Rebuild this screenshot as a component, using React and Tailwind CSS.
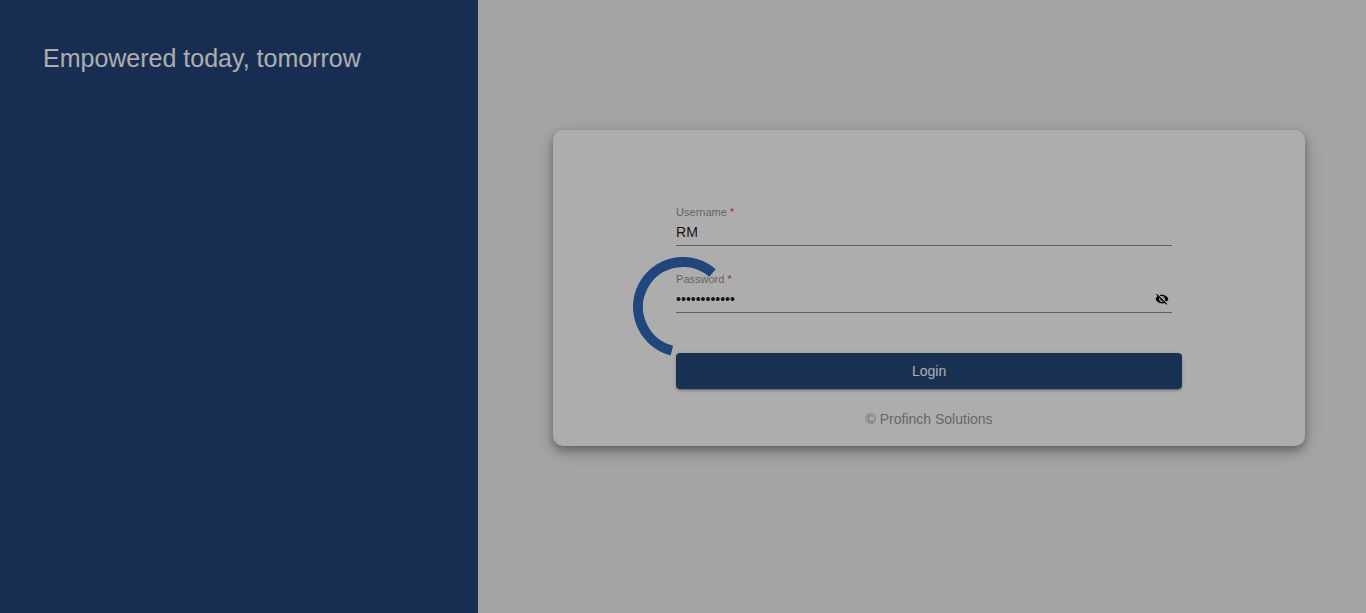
import { useState } from "react";
import { MdVisibility, MdVisibilityOff } from "react-icons/md";

function Field({ id, label, type, value, onChange, children }) {
  return (
    <div className="mr-2.5 border-b border-[#8c8c8c] pb-[5px]">
      <label htmlFor={id} className="block text-[11px] leading-3 text-[#959595]">
        {label} <span className="text-[#f44336]">*</span>
      </label>
      <div className="mt-1.5 flex h-4 items-center">
        <input
          id={id}
          type={type}
          required
          value={value}
          onChange={(e) => onChange(e.target.value)}
          className="h-4 min-w-0 flex-1 bg-transparent p-0 text-sm leading-4 text-black/90 outline-none"
        />
        {children}
      </div>
    </div>
  );
}

function Spinner() {
  return (
    <div
      role="progressbar"
      aria-label="Loading"
      className="fixed inset-0 flex items-center justify-center bg-black/32"
    >
      <svg viewBox="0 0 100 100" className="size-[100px]" fill="none">
        <path
          d="M79.5 16A45 45 0 1 0 38.9 93.6"
          stroke="#21467c"
          strokeWidth="10"
        />
      </svg>
    </div>
  );
}

export default function App() {
  const [username, setUsername] = useState("RM");
  const [password, setPassword] = useState("password1234");
  const [visible, setVisible] = useState(false);

  return (
    <div className="flex min-h-screen font-['Liberation_Sans',Arial,sans-serif]">
      <aside className="w-[35%] bg-[#22457a] px-[43px] py-10">
        <h1 className="text-[25px] leading-9 whitespace-nowrap text-white">
          Empowered today, tomorrow
        </h1>
      </aside>
      <main className="flex-1 bg-[#f3f3f3] pt-[130px] pr-[61px] pl-[75px]">
        <form
          onSubmit={(e) => e.preventDefault()}
          className="rounded-[10px] bg-white px-[123px] pt-[76px] pb-[17px] shadow-[0_4px_8px_rgba(0,0,0,0.3),0_6px_20px_rgba(0,0,0,0.19)]"
        >
          <div className="flex flex-col gap-[27px]">
            <Field
              id="username"
              label="Username"
              type="text"
              value={username}
              onChange={setUsername}
            />
            <Field
              id="password"
              label="Password"
              type={visible ? "text" : "password"}
              value={password}
              onChange={setPassword}
            >
              <button
                type="button"
                aria-label="Toggle password visibility"
                onClick={() => setVisible(!visible)}
                className="mr-[3px] text-black"
              >
                {visible ? (
                  <MdVisibility className="size-3.5" />
                ) : (
                  <MdVisibilityOff className="size-3.5" />
                )}
              </button>
            </Field>
          </div>
          <button
            type="submit"
            className="mt-10 block h-9 w-full rounded bg-[#254a7c] text-sm font-medium text-white shadow-[0_3px_1px_-2px_rgba(0,0,0,0.2),0_2px_2px_rgba(0,0,0,0.14),0_1px_5px_rgba(0,0,0,0.12)]"
          >
            Login
          </button>
          <p className="mt-5 text-center text-sm text-[#999999]">
            © Profinch Solutions
          </p>
        </form>
      </main>
      <Spinner />
    </div>
  );
}
